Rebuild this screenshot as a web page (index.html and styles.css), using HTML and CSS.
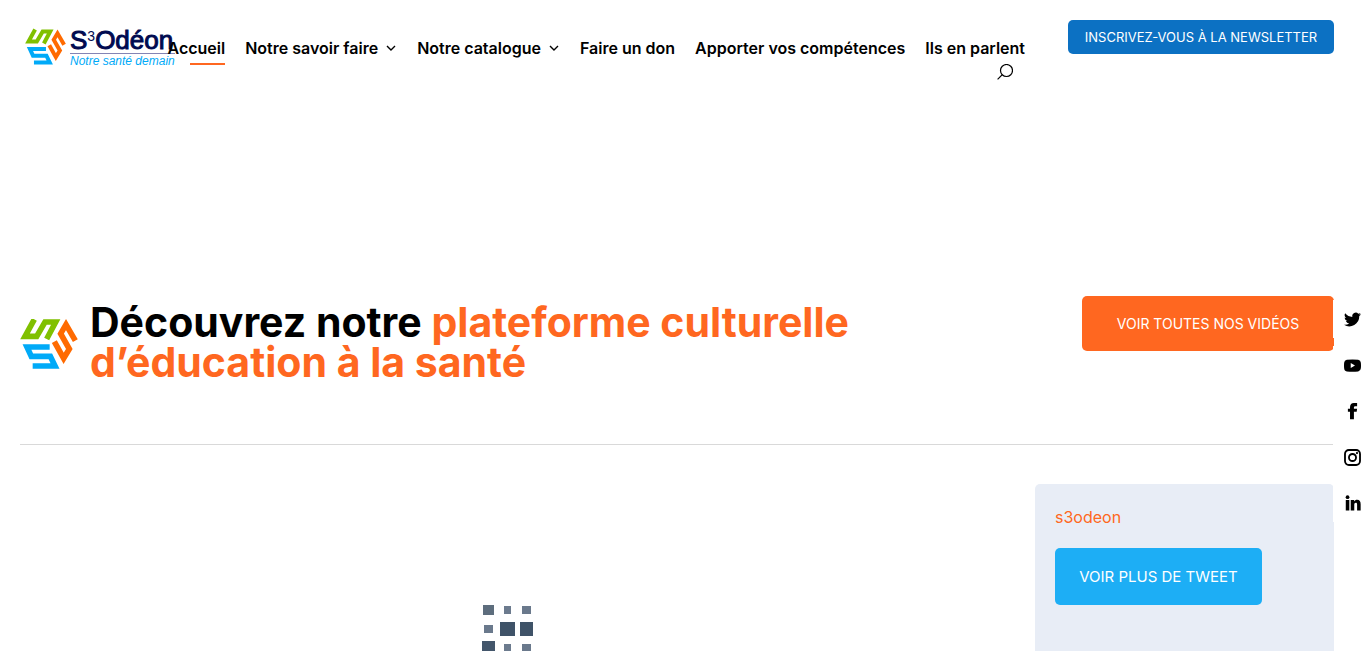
FILE: index.html
```
<!DOCTYPE html>
<html lang="fr">
<head>
    <meta charset="UTF-8">
    <meta name="viewport" content="width=device-width, initial-scale=1.0">
    <title>S3Odéon</title>
    <link rel="stylesheet" href="styles.css">
</head>
<body>
    <svg class="sprite" aria-hidden="true">
        <symbol id="mark" viewBox="14 27 174 150">
            <g fill="none" stroke-width="17" stroke-miterlimit="10">
                <path stroke="#80c000" d="M57 28 L29 79 H64 L89 36 H121 L94 87"/>
                <path stroke="#00aaf8" d="M103 111 H35 L48 139 H105 L119 168 H52"/>
                <path stroke="#ff6a00" d="M117 95 L145 145 L162 117 L136 71 L152 44 L180 92"/>
            </g>
        </symbol>
    </svg>

    <header class="header">
        <a href="#" class="logo">
            <svg class="logo-mark"><use href="#mark"/></svg>
            <span class="logo-text">
                <span class="logo-name">S<sup>3</sup>Odéon</span>
                <span class="logo-slogan">Notre santé demain</span>
            </span>
        </a>
        <nav class="nav">
            <ul class="menu">
                <li><a href="#" class="active">Accueil</a></li>
                <li><a href="#">Notre savoir faire <svg class="chevron" viewBox="0 0 10 7"><path d="M1 1l4 4 4-4"/></svg></a></li>
                <li><a href="#">Notre catalogue <svg class="chevron" viewBox="0 0 10 7"><path d="M1 1l4 4 4-4"/></svg></a></li>
                <li><a href="#">Faire un don</a></li>
                <li><a href="#">Apporter vos compétences</a></li>
                <li><a href="#">Ils en parlent</a></li>
            </ul>
            <button type="button" class="search" aria-label="Rechercher">
                <svg viewBox="0 0 16 16"><circle cx="9.500" cy="6.500" r="6"/><path d="M5.300 10.700L.6 15.400"/></svg>
            </button>
        </nav>
        <a href="#" class="btn btn-newsletter">INSCRIVEZ-VOUS À LA NEWSLETTER</a>
    </header>

    <main class="main">
        <section class="intro">
            <svg class="intro-mark"><use href="#mark"/></svg>
            <h1>Découvrez notre <span>plateforme culturelle d’éducation à la santé</span></h1>
            <a href="#" class="btn btn-videos">VOIR TOUTES NOS VIDÉOS</a>
        </section>

        <div class="content">
            <div class="videos">
                <svg class="loader" viewBox="0 0 52 46">
                    <rect x="1" y="0" width="11" height="10" fill="#5d6d7d"/>
                    <rect x="22" y="1" width="7" height="8" fill="#6c7b8e"/>
                    <rect x="40" y="1" width="9" height="8" fill="#6a798c"/>
                    <rect x="2" y="20" width="9" height="8" fill="#6a798c"/>
                    <rect x="18" y="17" width="15" height="14" fill="#3f5368"/>
                    <rect x="38" y="17" width="13" height="14" fill="#3f5368"/>
                    <rect x="0" y="36" width="13" height="10" fill="#43566b"/>
                    <rect x="22" y="39" width="7" height="7" fill="#6c7b8e"/>
                    <rect x="40" y="39" width="9" height="7" fill="#6a798c"/>
                </svg>
            </div>
            <aside class="tweets">
                <a href="#" class="account">s3odeon</a>
                <a href="#" class="btn btn-tweet">VOIR PLUS DE TWEET</a>
            </aside>
        </div>
    </main>

    <div class="social">
        <a href="#" aria-label="Twitter"><svg viewBox="0 0 24 24"><path d="M24 4.6a10 10 0 0 1-2.8.8 5 5 0 0 0 2.1-2.7 10 10 0 0 1-3.1 1.2 4.9 4.9 0 0 0-8.4 4.5A14 14 0 0 1 1.7 3.2a4.9 4.9 0 0 0 1.5 6.5 4.9 4.9 0 0 1-2.2-.6 4.9 4.9 0 0 0 3.9 4.9 5 5 0 0 1-2.2.1 4.9 4.9 0 0 0 4.6 3.4A9.9 9.9 0 0 1 0 19.5 14 14 0 0 0 21.5 7.1 10 10 0 0 0 24 4.6z"/></svg></a>
        <a href="#" aria-label="YouTube"><svg viewBox="0 0 24 24"><path fill-rule="evenodd" d="M4 4Q12 3 20 4Q23.500 4.500 23.800 8Q24.200 12 23.800 16Q23.500 20 20 20.300Q12 21 4 20.300Q.5 20 .2 16Q-.2 12 .2 8Q.5 4.500 4 4zM9.500 8.500v7l6-3.500z"/></svg></a>
        <a href="#" aria-label="Facebook"><svg viewBox="0 0 24 24"><path d="M8.500 23V12.500H5.500V8h3V6c0-4 2-6 5.500-6H18.500v4.500h-2.500C14.500 4.500 14 5.300 14 6.500V8h4.500l-.6 4.500H14V23z"/></svg></a>
        <a href="#" aria-label="Instagram"><svg viewBox="0 0 24 24"><g fill="none" stroke="#000" stroke-width="2.600"><rect x="1.400" y="1.400" width="21.200" height="21.200" rx="5.500"/><circle cx="12" cy="12" r="5"/></g><circle cx="18.300" cy="5.700" r="1.600"/></svg></a>
        <a href="#" aria-label="LinkedIn"><svg viewBox="0 0 24 24"><circle cx="5" cy="3" r="2.600"/><path d="M2.500 7h5v15h-5zM9.500 7h4.800v2c.9-1.500 2.400-2.300 4.300-2.300 3.500 0 4.900 2.300 4.900 6.300v9h-5v-8.200c0-1.900-.5-2.800-1.900-2.800-1.500 0-2.100 1-2.100 2.900V22h-5z"/></svg></a>
    </div>
</body>
</html>
```
FILE: styles.css
```
* {
    box-sizing: border-box;
}
body {
    font-family: Inter, "Open Sans", sans-serif;
    font-size: 16px;
    color: #000;
    background: #fff;
    margin: 0;
    min-height: 100vh;
    display: flex;
    flex-direction: column;
}
a {
    color: inherit;
    text-decoration: none;
}
svg {
    display: block;
    flex: none;
}
.sprite {
    position: absolute;
    width: 0;
    height: 0;
}
.header {
    display: flex;
    align-items: flex-start;
    padding: 20px 32px 0 25px;
    height: 112px;
}
.logo {
    display: flex;
    align-items: flex-start;
    gap: 4px;
    padding-top: 8px;
    width: 150px;
    flex: none;
}
.logo-mark {
    width: 41px;
    height: 38px;
}
.logo-text {
    font-family: "Liberation Sans", Arial, sans-serif;
    white-space: nowrap;
}
.logo-name {
    display: block;
    font-size: 26px;
    line-height: 25px;
    height: 26px;
    color: #000a50;
    -webkit-text-stroke: 1px #000a50;
    border-bottom: 1px solid #8484b4;
}
.logo-name sup {
    font-size: 14px;
    line-height: 1;
    vertical-align: 8px;
    -webkit-text-stroke: 0;
}
.logo-slogan {
    display: block;
    font-size: 12px;
    line-height: 14px;
    font-style: italic;
    color: #00aaf8;
}
.nav {
    flex: 1;
    min-width: 0;
    display: flex;
    flex-direction: column;
    align-items: flex-end;
    margin-right: 43px;
    padding-top: 16px;
}
.menu {
    list-style: none;
    display: flex;
    gap: 20px;
    margin: 0;
    padding: 0;
    font-weight: 600;
    line-height: 24px;
    white-space: nowrap;
}
.menu a {
    display: flex;
    align-items: center;
    gap: 8px;
    position: relative;
}
.active::after {
    content: "";
    position: absolute;
    right: 0;
    bottom: -5px;
    width: 35px;
    height: 2px;
    background: #ff6720;
}
.chevron {
    width: 10px;
    height: 7px;
    margin-right: 1px;
    fill: none;
    stroke: #000;
    stroke-width: 1.4;
}
.search {
    margin: 4px 12px 0 0;
    padding: 0;
    border: none;
    background: none;
    cursor: pointer;
}
.search svg {
    width: 16px;
    height: 16px;
    fill: none;
    stroke: #000;
    stroke-width: 1.2;
}
.btn {
    display: flex;
    align-items: center;
    justify-content: center;
    flex: none;
    border-radius: 5px;
    color: #fff;
    white-space: nowrap;
}
.btn-newsletter {
    width: 266px;
    height: 34px;
    font-size: 13px;
    background: #0c71c3;
}
.main {
    flex: 1;
    display: flex;
    flex-direction: column;
    padding: 184px 32px 0 20px;
}
.intro {
    display: flex;
    align-items: flex-start;
    height: 149px;
    border-bottom: 1px solid #d9d9d9;
}
.intro-mark {
    width: 58px;
    height: 50px;
    margin: 23px 12px 0 0;
}
h1 {
    flex: 1;
    max-width: 800px;
    margin: 6px auto 0 0;
    font-size: 41px;
    line-height: 40px;
    font-weight: 700;
}
h1 span,
.account {
    color: #ff6720;
}
.btn-videos {
    width: 252px;
    height: 55px;
    font-size: 14px;
    background: #ff6720;
}
.content {
    flex: 1;
    display: grid;
    grid-template-columns: 1fr 299px;
    gap: 40px;
    padding-top: 39px;
}
.videos {
    padding-top: 121px;
}
.loader {
    width: 52px;
    height: 46px;
    margin: 0 auto;
}
.tweets {
    display: flex;
    flex-direction: column;
    align-items: flex-start;
    gap: 19px;
    padding: 21px 20px 0;
    background: #e8edf6;
    border-radius: 5px 5px 0 0;
}
.account {
    line-height: 24px;
}
.btn-tweet {
    width: 207px;
    height: 57px;
    font-size: 15px;
    background: #1daef5;
}
.social {
    position: fixed;
    top: 300px;
    right: 0;
    display: flex;
    flex-direction: column;
    gap: 8px;
}
.social a {
    display: flex;
    align-items: center;
    width: 33px;
    height: 38px;
    padding-left: 11px;
    background: #fff;
}
.social svg {
    width: 17px;
    height: 17px;
}
```
